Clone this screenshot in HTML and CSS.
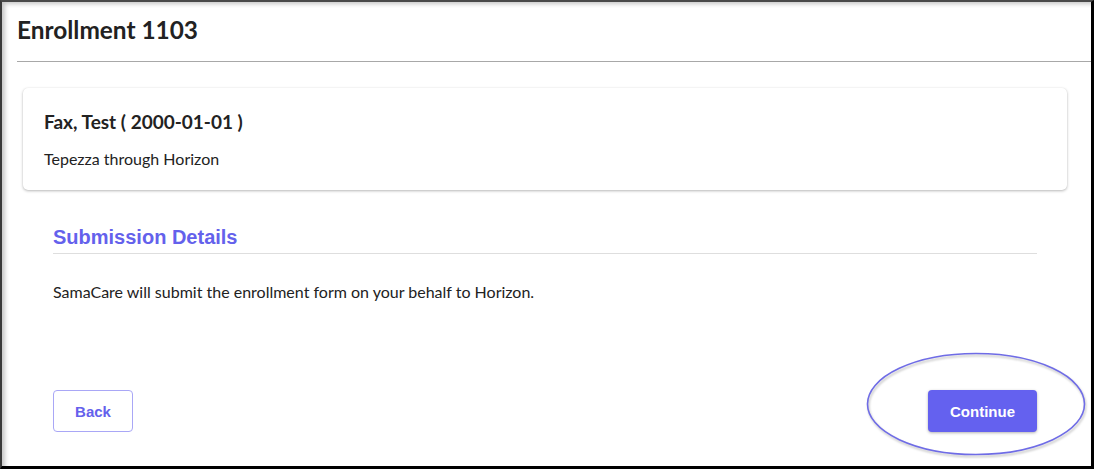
FILE: index.html
```html
<!DOCTYPE html>
<html>
<head>
<meta charset="utf-8">
<link rel="stylesheet" href="styles.css">
</head>
<body>
<div class="frame">
  <header class="page-header">
    <h1 class="page-title">Enrollment 1103</h1>
  </header>
  <section class="card">
    <h2 class="card-title">Fax, Test ( 2000-01-01 )</h2>
    <p class="card-sub">Tepezza through Horizon</p>
  </section>
  <section class="details">
    <h3 class="details-title">Submission Details</h3>
    <p class="details-text">SamaCare will submit the enrollment form on your behalf to Horizon.</p>
  </section>
  <div class="actions">
    <button class="btn btn-outline">Back</button>
    <div class="continue-wrap">
      <svg class="ring" width="224" height="108" viewBox="0 0 224 108">
        <ellipse cx="112" cy="54" rx="108.5" ry="50.5" fill="none" stroke="#6f6ce6" stroke-width="1.6"/>
      </svg>
      <button class="btn btn-primary">Continue</button>
    </div>
  </div>
</div>
</body>
</html>
```
FILE: styles.css
```css
* { box-sizing: border-box; }
html, body { margin: 0; padding: 0; background: #fff; }
body { width: 1094px; height: 469px; overflow: hidden; font-family: "Lato", "Liberation Sans", sans-serif; color: #222; }

.frame {
  width: 1094px;
  height: 469px;
  border-top: 2px solid #4a4a4a;
  border-left: 2px solid #3a3a3a;
  border-right: 3px solid #000;
  border-bottom: 3px solid #000;
  box-shadow: inset 5px 4px 4px -2px rgba(0,0,0,0.22);
  display: flex;
  flex-direction: column;
}

.page-header {
  margin-left: 15px;
  border-bottom: 1px solid #a8a8a8;
  padding: 14px 0 17px 0;
}
.page-title {
  margin: 0;
  font-size: 24.4px;
  line-height: 28px;
  font-weight: 700;
  color: #222;
}

.card {
  margin: 26px 24px 0 21px;
  background: #fff;
  border-radius: 5px;
  box-shadow: 0 1px 3px rgba(0,0,0,0.28), 0 0 1px rgba(0,0,0,0.08);
  padding: 22px 20px 22px 21px;
}
.card-title {
  margin: 0;
  font-size: 19px;
  line-height: 23px;
  font-weight: 700;
  color: #222;
}
.card-sub {
  margin: 16px 0 0 0;
  font-size: 16px;
  line-height: 19px;
  color: #222;
}

.details {
  margin: 35px 54px 0 51px;
}
.details-title {
  margin: 0;
  font-family: "Liberation Sans", Arial, sans-serif;
  font-size: 20px;
  line-height: 24px;
  font-weight: 700;
  color: #6461ec;
  padding-bottom: 4px;
  border-bottom: 1px solid #dedede;
}
.details-text {
  margin: 28px 0 0 0;
  font-size: 16px;
  line-height: 19px;
  color: #222;
}

.actions {
  margin: 89px 54px 0 51px;
  display: flex;
  justify-content: space-between;
  align-items: center;
}
.btn {
  height: 42px;
  border-radius: 4px;
  font-family: "Liberation Sans", Arial, sans-serif;
  font-weight: 700;
  font-size: 15px;
  cursor: pointer;
}
.btn-outline {
  width: 80px;
  background: #fff;
  border: 1px solid #a9a7f6;
  color: #6461ec;
}
.continue-wrap {
  position: relative;
}
.btn-primary {
  width: 109px;
  background: #6461ef;
  border: none;
  color: #fff;
  box-shadow: 0 1px 3px rgba(0,0,0,0.3);
}
.ring {
  position: absolute;
  left: -64px;
  top: -40px;
  filter: drop-shadow(1px 2px 1px rgba(0,0,0,0.25));
  pointer-events: none;
}
```
